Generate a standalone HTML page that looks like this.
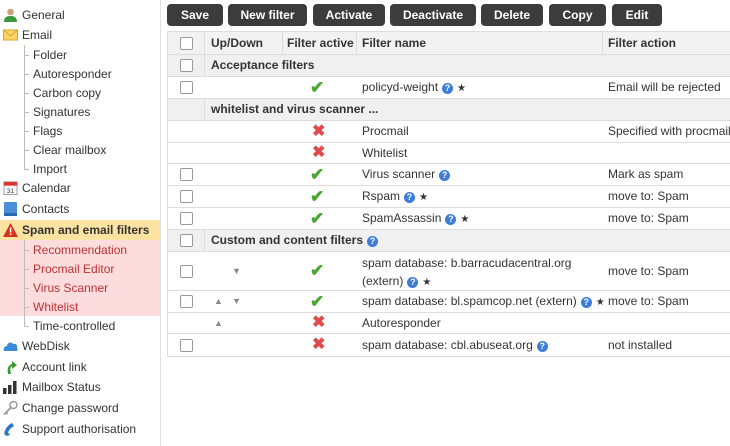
<!DOCTYPE html>
<html><head><meta charset="utf-8"><style>
*{box-sizing:border-box;margin:0;padding:0}
body{width:730px;height:446px;overflow:hidden;background:#fff;font-family:"Liberation Sans",Arial,sans-serif;font-size:12px;color:#333;position:relative}
.sb{position:absolute;left:0;top:0;width:161px;height:446px;border-right:1px solid #e2e2e2}
.it{position:absolute;left:0;width:160px;height:20px;line-height:20px;white-space:nowrap}
.it .ic{position:absolute;left:3px;top:3px;width:15px;height:14px}
.it .t{position:absolute;left:22px}
.sub .t{left:33px}
.sub:before{content:"";position:absolute;left:24px;top:10px;width:5px;border-top:1px solid #bbb}
.tree{position:absolute;left:24px;border-left:1px solid #bbb}
.btn{position:absolute;top:4px;height:22px;line-height:22px;background:#3c3c3c;color:#fff;font-weight:bold;text-align:center;border-radius:4px;font-size:12px}
.r{position:absolute;left:168px;width:562px;border-bottom:1px solid #ddd}
.g{background:#f0f0f0;font-weight:bold}
.c{position:absolute;white-space:nowrap}
.cb{position:absolute;left:12px;width:13px;height:13px;border:1px solid #999;border-radius:2px;background:#fff}
.q{display:inline-block;width:11px;height:11px;border-radius:50%;background:#3b7dd8;color:#fff;font-size:9px;line-height:11px;text-align:center;font-weight:bold;vertical-align:0;margin-left:4px}
.s{font-size:10px;margin-left:4px}
.ok{position:absolute;left:142px;color:#4aa533;font-size:17px;font-weight:bold}
.x{position:absolute;left:144px;color:#e04a4a;font-size:16px;font-weight:bold}
.ar{position:absolute;color:#888;font-size:9px}
</style></head><body>
<div class="sb">
<div class="it" style="top:5px"><svg class="ic" viewBox="0 0 15 14"><circle cx="7.5" cy="4" r="3.3" fill="#c9a27a"/><path d="M1 14c0-5 3-6 6.5-6S14 9 14 14z" fill="#3a9a3a"/></svg><span class="t">General</span></div>
<div class="it" style="top:25px"><svg class="ic" viewBox="0 0 15 14"><rect x="0.5" y="2" width="14" height="10" fill="#fbd56a" stroke="#d9a520"/><path d="M.5 2l7 6 7-6" fill="none" stroke="#d9a520"/></svg><span class="t">Email</span></div>
<div class="tree" style="top:45px;height:124px"></div>
<div class="it sub" style="top:45px"><span class="t">Folder</span></div>
<div class="it sub" style="top:64px"><span class="t">Autoresponder</span></div>
<div class="it sub" style="top:83px"><span class="t">Carbon copy</span></div>
<div class="it sub" style="top:102px"><span class="t">Signatures</span></div>
<div class="it sub" style="top:121px"><span class="t">Flags</span></div>
<div class="it sub" style="top:140px"><span class="t">Clear mailbox</span></div>
<div class="it sub" style="top:159px"><span class="t">Import</span></div>
<div class="it" style="top:178px"><svg class="ic" viewBox="0 0 15 15"><rect x="0.5" y="1" width="14" height="13.5" fill="#fff" stroke="#999"/><rect x="0.5" y="1" width="14" height="4" fill="#d33"/><text x="7.5" y="13" font-size="7" text-anchor="middle" font-family="Liberation Sans" fill="#333">31</text></svg><span class="t">Calendar</span></div>
<div class="it" style="top:199px"><svg class="ic" viewBox="0 0 15 14"><rect x="1" y="0" width="13" height="14" rx="1" fill="#4a90d9"/><rect x="1" y="11" width="13" height="3" fill="#2a6ab0"/></svg><span class="t">Contacts</span></div>
<div style="position:absolute;left:0;top:220px;width:160px;height:20px;background:#fde3a1"></div>
<div style="position:absolute;left:0;top:240px;width:160px;height:76px;background:#fcdcdc"></div>
<div class="it" style="top:220px;font-weight:bold"><svg class="ic" viewBox="0 0 15 14"><path d="M7.5 0L15 14H0z" fill="#d8301a"/><rect x="6.8" y="4.5" width="1.6" height="5" fill="#fff"/><rect x="6.8" y="10.5" width="1.6" height="1.6" fill="#fff"/></svg><span class="t">Spam and email filters</span></div>
<div class="tree" style="top:240px;height:86px"></div>
<div class="it sub" style="top:240px;color:#b33"><span class="t">Recommendation</span></div>
<div class="it sub" style="top:259px;color:#b33"><span class="t">Procmail Editor</span></div>
<div class="it sub" style="top:278px;color:#b33"><span class="t">Virus Scanner</span></div>
<div class="it sub" style="top:297px;color:#b33"><span class="t">Whitelist</span></div>
<div class="it sub" style="top:316px"><span class="t">Time-controlled</span></div>
<div class="it" style="top:336px"><svg class="ic" viewBox="0 0 15 14"><path d="M1 12c-1-3 1-5 3-5 0-3 4-5 6-2 3-1 5 2 4 4 1 1 1 3-1 3z" fill="#3a8ad8"/></svg><span class="t">WebDisk</span></div>
<div class="it" style="top:357px"><svg class="ic" viewBox="0 0 15 14"><path d="M5 14C4 9 5 5 9 4V1l5 4-5 4V6C7 7 7 10 8 14z" fill="#3a9a3a"/></svg><span class="t">Account link</span></div>
<div class="it" style="top:377px"><svg class="ic" viewBox="0 0 15 14"><rect x="0" y="8" width="3.5" height="6" fill="#333"/><rect x="5" y="5" width="3.5" height="9" fill="#333"/><rect x="10" y="1" width="3.5" height="13" fill="#333"/></svg><span class="t">Mailbox Status</span></div>
<div class="it" style="top:398px"><svg class="ic" viewBox="0 0 15 14"><circle cx="10.5" cy="4" r="3.5" fill="none" stroke="#999" stroke-width="1.5"/><path d="M8 6.5L1 13.5M3 11.5l1.5 1.5" stroke="#999" stroke-width="1.8"/></svg><span class="t">Change password</span></div>
<div class="it" style="top:419px"><svg class="ic" viewBox="0 0 15 14"><path d="M2 13C0 11 3 4 9 1l2 3-3 2c-2 2-3 4-3 5l2 1-2 2z" fill="#2a78c8"/></svg><span class="t">Support authorisation</span></div>
</div>

<div class="btn" style="left:167px;width:56px">Save</div>
<div class="btn" style="left:228px;width:79px">New filter</div>
<div class="btn" style="left:313px;width:72px">Activate</div>
<div class="btn" style="left:390px;width:86px">Deactivate</div>
<div class="btn" style="left:481px;width:62px">Delete</div>
<div class="btn" style="left:549px;width:57px">Copy</div>
<div class="btn" style="left:612px;width:50px">Edit</div>

<div style="position:absolute;left:167px;top:31px;width:563px;height:326px;border-left:1px solid #ddd;border-top:1px solid #ddd"></div>

<div class="r" style="top:32px;height:23px;background:#f2f2f2;font-weight:bold;line-height:22px">
<div class="cb" style="top:5px"></div>
<div class="c" style="left:36px;height:22px;border-left:1px solid #ddd;padding-left:6px;width:78px">Up/Down</div>
<div class="c" style="left:114px;height:22px;border-left:1px solid #ddd;padding-left:4px;width:74px">Filter active</div>
<div class="c" style="left:188px;height:22px;border-left:1px solid #ddd;padding-left:5px;width:246px">Filter name</div>
<div class="c" style="left:434px;height:22px;border-left:1px solid #ddd;padding-left:5px">Filter action</div>
</div>

<div class="r g" style="top:55px;height:22px;line-height:21px"><div class="cb" style="top:4px"></div><div class="c" style="left:36px;height:21px;border-left:1px solid #ddd;padding-left:6px">Acceptance filters</div></div>
<div class="r" style="top:77px;height:22px;line-height:21px"><div class="cb" style="top:4px"></div><span class="ok" style="top:0">✔</span><div class="c" style="left:194px">policyd-weight<span class="q">?</span><span class="s">★</span></div><div class="c" style="left:440px">Email will be rejected</div></div>
<div class="r g" style="top:99px;height:22px;line-height:21px"><div class="c" style="left:36px;height:21px;border-left:1px solid #ddd;padding-left:6px">whitelist and virus scanner ...</div></div>
<div class="r" style="top:121px;height:22px;line-height:21px"><span class="x" style="top:0">✖</span><div class="c" style="left:194px">Procmail</div><div class="c" style="left:440px">Specified with procmail</div></div>
<div class="r" style="top:143px;height:21px;line-height:20px"><span class="x" style="top:0">✖</span><div class="c" style="left:194px">Whitelist</div></div>
<div class="r" style="top:164px;height:22px;line-height:21px"><div class="cb" style="top:4px"></div><span class="ok" style="top:0">✔</span><div class="c" style="left:194px">Virus scanner<span class="q">?</span></div><div class="c" style="left:440px">Mark as spam</div></div>
<div class="r" style="top:186px;height:22px;line-height:21px"><div class="cb" style="top:4px"></div><span class="ok" style="top:0">✔</span><div class="c" style="left:194px">Rspam<span class="q">?</span><span class="s">★</span></div><div class="c" style="left:440px">move to: Spam</div></div>
<div class="r" style="top:208px;height:22px;line-height:21px"><div class="cb" style="top:4px"></div><span class="ok" style="top:0">✔</span><div class="c" style="left:194px">SpamAssassin<span class="q">?</span><span class="s">★</span></div><div class="c" style="left:440px">move to: Spam</div></div>
<div class="r g" style="top:230px;height:22px;line-height:21px"><div class="cb" style="top:4px"></div><div class="c" style="left:36px;height:21px;border-left:1px solid #ddd;padding-left:6px">Custom and content filters<span class="q">?</span></div></div>
<div class="r" style="top:252px;height:39px;line-height:18px"><div class="cb" style="top:13px"></div><span class="ar" style="left:64px;top:10px">▼</span><span class="ok" style="top:9px;line-height:20px">✔</span><div class="c" style="left:194px;top:2px">spam database: b.barracudacentral.org<br>(extern)<span class="q">?</span><span class="s">★</span></div><div class="c" style="left:440px;top:10px">move to: Spam</div></div>
<div class="r" style="top:291px;height:22px;line-height:21px"><div class="cb" style="top:4px"></div><span class="ar" style="left:46px;top:0">▲</span><span class="ar" style="left:64px;top:0">▼</span><span class="ok" style="top:0">✔</span><div class="c" style="left:194px">spam database: bl.spamcop.net (extern)<span class="q">?</span><span class="s">★</span></div><div class="c" style="left:440px">move to: Spam</div></div>
<div class="r" style="top:313px;height:21px;line-height:20px"><span class="ar" style="left:46px;top:0">▲</span><span class="x" style="top:0">✖</span><div class="c" style="left:194px">Autoresponder</div></div>
<div class="r" style="top:334px;height:23px;line-height:22px"><div class="cb" style="top:5px"></div><span class="x" style="top:0">✖</span><div class="c" style="left:194px">spam database: cbl.abuseat.org<span class="q">?</span></div><div class="c" style="left:440px">not installed</div></div>
</body></html>
